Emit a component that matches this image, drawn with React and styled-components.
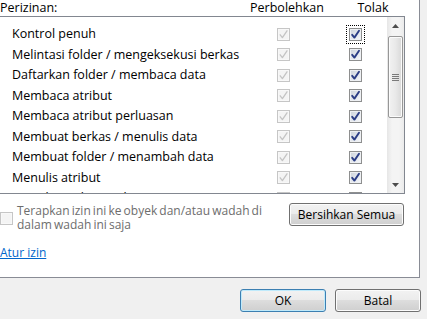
import React from 'react';
import styled, { createGlobalStyle, css } from 'styled-components';

const GlobalStyle = createGlobalStyle`
  html, body {
    margin: 0;
    padding: 0;
    background: #f0f0f0;
  }
  body {
    font-family: "Open Sans", "Noto Sans", "Liberation Sans", sans-serif;
    font-size: 12px;
    color: #000;
  }
  * { box-sizing: border-box; }
`;

const Window = styled.div`
  width: 427px;
  height: 319px;
  overflow: hidden;
  background: #f0f0f0;
  display: flex;
  flex-direction: column;
`;

const TabPage = styled.div`
  width: 420px;
  height: 278px;
  background: #fff;
  border-right: 1px solid #898c95;
  border-bottom: 1px solid #898c95;
  display: flex;
  flex-direction: column;
`;

const ColumnGrid = styled.div`
  display: grid;
  grid-template-columns: 247px 80px 1fr;
  height: 16px;
  line-height: 16px;
  align-items: center;
  white-space: nowrap;
`;

const HeaderLabel = styled.span`
  font-size: 12.5px;
  text-align: ${p => (p.$center ? 'center' : 'left')};
  padding-bottom: 1px;
`;

const ListBox = styled.div`
  width: 405px;
  height: 178px;
  border-top: 1px solid #828790;
  border-right: 1px solid #828790;
  border-bottom: 1px solid #828790;
  display: flex;
`;

const Items = styled.div`
  flex: 1;
  overflow: hidden;
  padding-top: 7px;
`;

const Row = styled.div`
  display: grid;
  grid-template-columns: 1fr 72px 68px;
  height: 20.5px;
  align-items: center;
`;

const Name = styled.span`
  padding-left: 12px;
  font-size: 12.5px;
  white-space: nowrap;
  line-height: 20px;
`;

const Cell = styled.div`
  display: flex;
  align-items: center;
  padding-left: 30px;
`;

const Box = styled.span`
  flex-shrink: 0;
  width: 13px;
  height: 13px;
  display: inline-flex;
  align-items: center;
  justify-content: center;
  border: 1px solid ${p => (p.$disabled ? '#c6c6c6' : '#8e8f8f')};
  background: ${p =>
    p.$disabled
      ? '#f4f4f4'
      : 'linear-gradient(135deg, #cbd1da 0%, #e4e8ee 55%, #f7f8fa 100%)'};
  box-shadow: inset 0 0 0 1px ${p => (p.$disabled ? '#f8f8f8' : '#eef0f3')};
  ${p =>
    p.$focused &&
    css`
      outline: 1px dotted #000;
      outline-offset: 2px;
    `}
`;

const CheckBox = ({ checked, disabled, focused }) => (
  <Box $disabled={disabled} $focused={focused}>
    {checked && (
      <svg width="11" height="11" viewBox="0 0 11 11">
        <path
          d="M2.2 5.8 L4.4 8.6 L9 1.8"
          fill="none"
          stroke={disabled ? '#c4c4c4' : '#2b3d85'}
          strokeWidth={disabled ? 1.3 : 1.9}
          strokeLinecap="round"
          strokeLinejoin="round"
        />
      </svg>
    )}
  </Box>
);

const ScrollBar = styled.div`
  width: 17px;
  display: flex;
  flex-direction: column;
  background: linear-gradient(to right, #e6e6e6, #f4f4f4 30%, #f4f4f4 70%, #ebebeb);
`;

const ArrowButton = styled.div`
  height: 17px;
  display: flex;
  align-items: center;
  justify-content: center;
`;

const Thumb = styled.div`
  margin: 2px 1px 0 1px;
  height: 82px;
  border: 1px solid #979797;
  border-radius: 2px;
  background: linear-gradient(to right, #f2f2f2, #e9e9e9 50%, #d8d8d8);
  box-shadow: inset 0 0 0 1px #fbfbfb;
  display: flex;
  align-items: center;
  justify-content: center;
`;

const Track = styled.div`
  flex: 1;
`;

const Arrow = ({ down }) => (
  <svg width="7" height="4" viewBox="0 0 7 4">
    <path d={down ? 'M0 0 H7 L3.5 4 Z' : 'M0 4 H7 L3.5 0 Z'} fill="#4d4d4d" />
  </svg>
);

const Grip = () => (
  <svg width="7" height="7" viewBox="0 0 7 7">
    {[0.5, 2.5, 4.5, 6.5].map(y => (
      <line key={y} x1="0" x2="7" y1={y} y2={y} stroke="#7a7a7a" strokeWidth="1" />
    ))}
  </svg>
);

const OptionsRow = styled.div`
  margin-top: 9px;
  padding-right: 15px;
  display: flex;
  justify-content: space-between;
  align-items: flex-start;
`;

const InheritOption = styled.label`
  display: flex;
  align-items: center;
  gap: 4px;
  margin-top: 1px;
  color: #6d6d6d;
  line-height: 14px;
  word-spacing: -1px;
`;

const Button = styled.button`
  font-family: inherit;
  font-size: 12px;
  color: #000;
  width: ${p => p.$width}px;
  height: ${p => p.$height}px;
  padding: 0;
  border-radius: 3px;
  border: 1px solid ${p => (p.$default ? '#3c7fb1' : '#707070')};
  background: linear-gradient(
    to bottom,
    #f2f2f2 0%,
    #ebebeb 48%,
    #dddddd 50%,
    #cfcfcf 100%
  );
  box-shadow: inset 0 0 0 1px ${p => (p.$default ? '#bfeafb' : '#fcfcfc')};
`;

const Link = styled.a`
  margin-top: 14px;
  align-self: flex-start;
  color: #0066cc;
  text-decoration: underline;
  line-height: 14px;
  cursor: pointer;
`;

const Footer = styled.div`
  display: flex;
  justify-content: flex-end;
  gap: 9px;
  padding: 11px 6px 0 0;
`;

const permissions = [
  'Kontrol penuh',
  'Melintasi folder / mengeksekusi berkas',
  'Daftarkan folder / membaca data',
  'Membaca atribut',
  'Membaca atribut perluasan',
  'Membuat berkas / menulis data',
  'Membuat folder / menambah data',
  'Menulis atribut',
  'Menulis atribut perluasan',
];

export default function App() {
  return (
    <Window>
      <GlobalStyle />
      <TabPage>
        <ColumnGrid>
          <HeaderLabel>Perizinan:</HeaderLabel>
          <HeaderLabel $center>Perbolehkan</HeaderLabel>
          <HeaderLabel $center>Tolak</HeaderLabel>
        </ColumnGrid>

        <ListBox>
          <Items>
            {permissions.map((name, i) => (
              <Row key={name}>
                <Name>{name}</Name>
                <Cell>
                  <CheckBox checked disabled />
                </Cell>
                <Cell>
                  <CheckBox checked focused={i === 0} />
                </Cell>
              </Row>
            ))}
          </Items>
          <ScrollBar>
            <ArrowButton>
              <Arrow />
            </ArrowButton>
            <Thumb>
              <Grip />
            </Thumb>
            <Track />
            <ArrowButton>
              <Arrow down />
            </ArrowButton>
          </ScrollBar>
        </ListBox>

        <OptionsRow>
          <InheritOption>
            <CheckBox disabled />
            <span>
              Terapkan izin ini ke obyek dan/atau wadah di
              <br />
              dalam wadah ini saja
            </span>
          </InheritOption>
          <Button $width={115} $height={23}>Bersihkan Semua</Button>
        </OptionsRow>

        <Link>Atur izin</Link>
      </TabPage>

      <Footer>
        <Button $default $width={86} $height={23}>OK</Button>
        <Button $width={86} $height={23}>Batal</Button>
      </Footer>
    </Window>
  );
}
